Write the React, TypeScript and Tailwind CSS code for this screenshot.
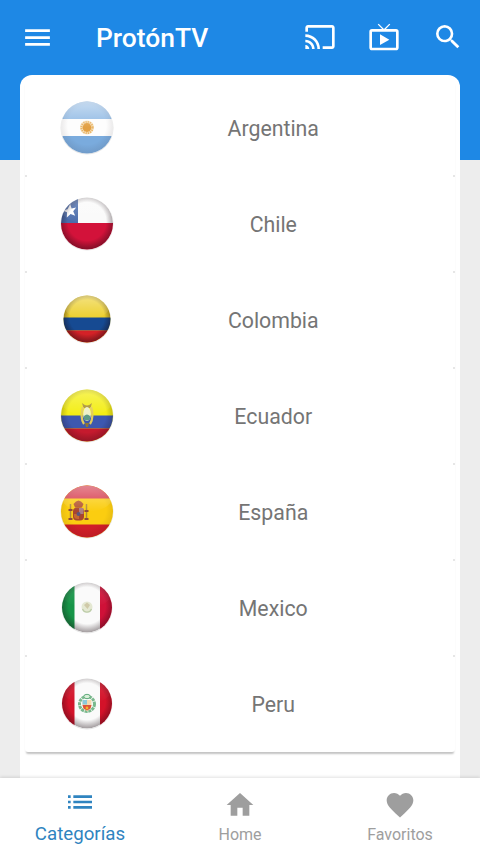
import type { ReactNode } from "react";
import { MdCast, MdFavorite, MdHome, MdList, MdLiveTv, MdMenu, MdSearch } from "react-icons/md";

type Country = {
  id: string;
  name: string;
  radius: number;
  cy: number;
  gloss: number;
  shade: number;
  flag: ReactNode;
};

// Flags are drawn on a 60x60 canvas and clipped to a circle centered at x=30
const countries: Country[] = [
  {
    id: "ar",
    name: "Argentina",
    radius: 26,
    cy: 29.5,
    gloss: 0.5,
    shade: 0.1,
    flag: (
      <>
        <rect width="60" height="60" fill="#fdfdfd" />
        <rect width="60" height="21" fill="#8fb9e4" />
        <rect y="38" width="60" height="22" fill="#7aabdd" />
        <circle cx="30" cy="29.5" r="7" fill="#f6e3c2" />
        <circle cx="30" cy="29.5" r="5.6" fill="none" stroke="#e9b567" strokeWidth="2" strokeDasharray="1.2 1" />
        <circle cx="30" cy="29.5" r="4.4" fill="#e2a044" />
      </>
    ),
  },
  {
    id: "cl",
    name: "Chile",
    radius: 26,
    cy: 29.5,
    gloss: 0.25,
    shade: 0.45,
    flag: (
      <>
        <rect width="60" height="60" fill="#fafafa" />
        <rect width="21" height="29" fill="#4a6cab" />
        <rect y="29" width="60" height="31" fill="#d3123a" />
        <path d="M13.2 10l1.4 4.4 4.6-1-3 3.8 2 4.6-4.6-1.8-3.8 3.4.2-5.2-4.6-1.6 5.2-1.4z" fill="#fff" />
      </>
    ),
  },
  {
    id: "co",
    name: "Colombia",
    radius: 23.5,
    cy: 29,
    gloss: 0.4,
    shade: 0.5,
    flag: (
      <>
        <rect width="60" height="60" fill="#eccf2b" />
        <rect y="27.5" width="60" height="13" fill="#164a92" />
        <rect y="40.5" width="60" height="20" fill="#d42127" />
      </>
    ),
  },
  {
    id: "ec",
    name: "Ecuador",
    radius: 26,
    cy: 29.5,
    gloss: 0.3,
    shade: 0.28,
    flag: (
      <>
        <rect width="60" height="60" fill="#f3ee14" />
        <rect y="29.5" width="60" height="13" fill="#3d58b0" />
        <rect y="42.5" width="60" height="20" fill="#c51a2e" />
        <path d="M25 17q3 2.5 5 2.5t5-2.5l-1.5 5h-7z" fill="#a99131" />
        <path d="M26 21c-2 5-2 13 1 17M34 21c2 5 2 13-1 17" fill="none" stroke="#e2cb5a" strokeWidth="2.2" />
        <ellipse cx="30" cy="28" rx="3.8" ry="7" fill="#eef0c8" />
        <path d="M27 30q3-3 6 0v3q-3 3-6 0z" fill="#5d9b86" />
        <path d="M28 37h4l-1 4h-2z" fill="#8e7535" />
      </>
    ),
  },
  {
    id: "es",
    name: "España",
    radius: 26,
    cy: 29.5,
    gloss: 0.4,
    shade: 0.1,
    flag: (
      <>
        <rect width="60" height="60" fill="#fbcd10" />
        <rect width="60" height="16.5" fill="#d6384a" />
        <rect y="42.5" width="60" height="18" fill="#d01e28" />
        <path d="M13.5 22v15M29.5 22v15" stroke="#b08a3c" strokeWidth="1.5" />
        <path d="M11.5 28h4M27.5 29h4M11.5 37h4M27.5 37h4" stroke="#8d4a3a" strokeWidth="2" />
        <path d="M16.5 22q5-7 10 0l-1.5 3.5h-7z" fill="#b5552f" />
        <rect x="16" y="25.5" width="11" height="13" rx="4" fill="#a8452f" />
        <path d="M22 26h4.5v6H22z" fill="#ad7c83" />
        <path d="M17 32h5v5q-4 .5-5-2z" fill="#c66a2e" />
        <circle cx="21.5" cy="32" r="2" fill="#59557f" />
      </>
    ),
  },
  {
    id: "mx",
    name: "Mexico",
    radius: 25,
    cy: 29.5,
    gloss: 0.12,
    shade: 0.4,
    flag: (
      <>
        <rect width="60" height="60" fill="#fafafa" />
        <rect width="17.5" height="60" fill="#169447" />
        <rect x="43" width="20" height="60" fill="#cf1138" />
        <circle cx="30" cy="29" r="5.5" fill="#e4e8d2" />
        <path d="M25.5 31a4.8 4.8 0 0 0 9 0" fill="none" stroke="#bccca8" strokeWidth="1.2" />
        <path d="M27 27l3-2.5 3 2.5-2.5 4z" fill="#cfc9a8" />
      </>
    ),
  },
  {
    id: "pe",
    name: "Peru",
    radius: 25,
    cy: 29.5,
    gloss: 0.12,
    shade: 0.4,
    flag: (
      <>
        <rect width="60" height="60" fill="#fafafa" />
        <rect width="17.5" height="60" fill="#d31229" />
        <rect x="43" width="20" height="60" fill="#d31229" />
        <circle cx="30" cy="30" r="7.5" fill="none" stroke="#79b88c" strokeWidth="3" strokeDasharray="3 .7" />
        <ellipse cx="30" cy="22.5" rx="3.2" ry="2.2" fill="#d9efd8" stroke="#5aa777" />
        <path d="M25.5 26h9v6q-1 4-4.5 5-3.5-1-4.5-5z" fill="#f3d8ae" />
        <path d="M25.5 26h4.5v4.5h-4.5z" fill="#8ac9dc" />
        <path d="M25.5 31h9l-1 3.5-3.5 2-3.5-2z" fill="#dc5238" />
        <circle cx="30" cy="34" r="1.4" fill="#f1b52a" />
      </>
    ),
  },
];

function FlagBadge({ country }: { country: Country }) {
  const { id, radius, cy, gloss, shade, flag } = country;

  return (
    <svg viewBox="0 0 60 60" className="size-[60px] shrink-0" aria-hidden="true">
      <defs>
        <clipPath id={`clip-${id}`}>
          <circle cx="30" cy={cy} r={radius} />
        </clipPath>
        <radialGradient id={`shade-${id}`} cx="50%" cy="46%" r="54%">
          <stop offset="0.68" stopColor="#1a0a10" stopOpacity="0" />
          <stop offset="1" stopColor="#1a0a10" stopOpacity={shade} />
        </radialGradient>
        <linearGradient id={`gloss-${id}`} x1="0" y1="0" x2="0" y2="1">
          <stop offset="0" stopColor="#fff" stopOpacity={gloss} />
          <stop offset="1" stopColor="#fff" stopOpacity="0" />
        </linearGradient>
      </defs>
      <circle cx="30" cy={cy + 0.5} r={radius + 0.5} fill="#000" opacity="0.1" />
      <g clipPath={`url(#clip-${id})`}>
        {flag}
        <circle cx="30" cy={cy} r={radius} fill={`url(#shade-${id})`} />
        <ellipse cx="30" cy={cy - radius / 2} rx={radius * 0.95} ry={radius * 0.5} fill={`url(#gloss-${id})`} />
      </g>
    </svg>
  );
}

export default function App() {
  return (
    <div className="flex h-[853px] w-[480px] flex-col overflow-hidden bg-[#ededed] font-[Roboto,sans-serif]">
      {/* Toolbar */}
      <header className="h-40 shrink-0 bg-[#1e88e5] text-white">
        <div className="flex h-[74px] items-center pr-4 pl-[21px]">
          <button aria-label="Menu">
            <MdMenu size={33} />
          </button>
          <h1 className="ml-[42px] flex-1 pt-0.5 text-[26.4px] leading-8 font-medium">ProtónTV</h1>
          <div className="flex items-center gap-8">
            <button aria-label="Cast">
              <MdCast size={32} />
            </button>
            <button aria-label="TV">
              <MdLiveTv size={32} />
            </button>
            <button aria-label="Buscar">
              <MdSearch size={32} />
            </button>
          </div>
        </div>
      </header>

      {/* Country list */}
      <main className="z-10 mx-5 -mt-[85px] flex-1 rounded-t-xl bg-white px-[5px] pt-[5px]">
        <ul className="rounded-[3px] shadow-[0_3px_2px_-1px_rgba(0,0,0,0.24)]">
          {countries.map((country, index) => (
            <li key={country.id} className="h-24">
              <div className="flex h-24 items-center pb-px pl-[31.5px]">
                <FlagBadge country={country} />
                <span className="flex-1 pt-0.5 pr-[25px] text-center text-[21.3px] leading-7 text-[#757575]">
                  {country.name}
                </span>
              </div>
              {index < countries.length - 1 && (
                <div className="-mt-px flex h-0.5 justify-between">
                  <span className="size-0.5 rounded-full bg-[#dedede]" />
                  <span className="size-0.5 rounded-full bg-[#dedede]" />
                </div>
              )}
            </li>
          ))}
        </ul>
      </main>

      {/* Bottom navigation */}
      <nav className="z-20 grid h-[75px] shrink-0 grid-cols-3 bg-white text-[#9e9e9e] shadow-[0_-1px_3px_rgba(0,0,0,0.12)]">
        <a className="flex flex-col items-center pt-2 text-[#2f84c0]">
          <MdList size={32} />
          <span className="mt-1 text-[18.7px] leading-6">Categorías</span>
        </a>
        <a className="flex flex-col items-center pt-[11px]">
          <MdHome size={32} />
          <span className="mt-1 text-base leading-5">Home</span>
        </a>
        <a className="flex flex-col items-center pt-[11px]">
          <MdFavorite size={32} />
          <span className="mt-1 text-base leading-5">Favoritos</span>
        </a>
      </nav>
    </div>
  );
}
